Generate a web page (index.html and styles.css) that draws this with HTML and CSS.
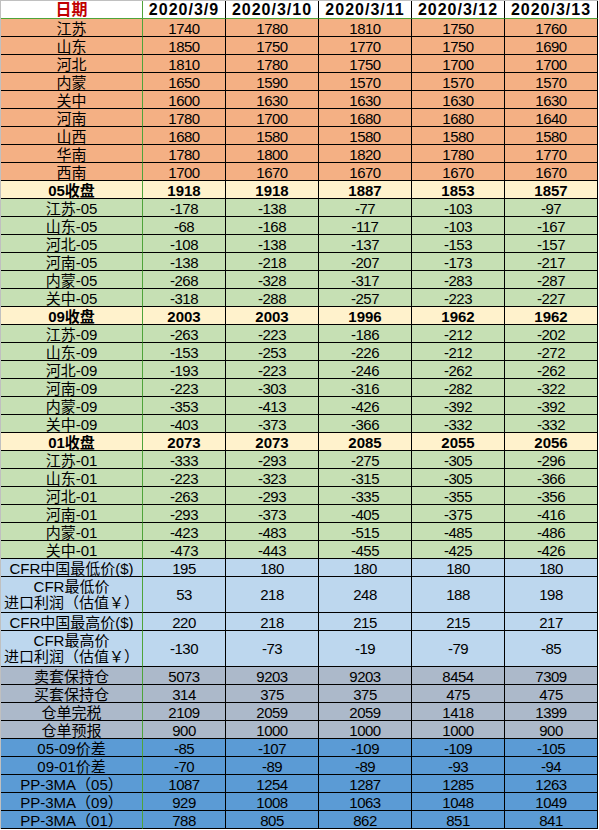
FILE: index.html
```html
<!DOCTYPE html>
<html lang="zh-CN">
<head>
<meta charset="utf-8">
<title>PP 价格表</title>
<link rel="stylesheet" href="styles.css">
</head>
<body>
<table class="sheet">
  <colgroup>
    <col class="c-label"><col class="c-first"><col class="c-data"><col class="c-data"><col class="c-data"><col class="c-data">
  </colgroup>
  <thead>
    <tr class="head">
      <th class="date-label">日期</th><th>2020/3/9</th><th>2020/3/10</th><th>2020/3/11</th><th>2020/3/12</th><th>2020/3/13</th>
    </tr>
  </thead>
  <tbody>
    <tr class="orange"><td>江苏</td><td>1740</td><td>1780</td><td>1810</td><td>1750</td><td>1760</td></tr>
    <tr class="orange"><td>山东</td><td>1850</td><td>1750</td><td>1770</td><td>1750</td><td>1690</td></tr>
    <tr class="orange"><td>河北</td><td>1810</td><td>1780</td><td>1750</td><td>1700</td><td>1700</td></tr>
    <tr class="orange"><td>内蒙</td><td>1650</td><td>1590</td><td>1570</td><td>1570</td><td>1570</td></tr>
    <tr class="orange"><td>关中</td><td>1600</td><td>1630</td><td>1630</td><td>1630</td><td>1630</td></tr>
    <tr class="orange"><td>河南</td><td>1780</td><td>1700</td><td>1680</td><td>1680</td><td>1640</td></tr>
    <tr class="orange"><td>山西</td><td>1680</td><td>1580</td><td>1580</td><td>1580</td><td>1580</td></tr>
    <tr class="orange"><td>华南</td><td>1780</td><td>1800</td><td>1820</td><td>1780</td><td>1770</td></tr>
    <tr class="orange"><td>西南</td><td>1700</td><td>1670</td><td>1670</td><td>1670</td><td>1670</td></tr>

    <tr class="close"><td>05收盘</td><td>1918</td><td>1918</td><td>1887</td><td>1853</td><td>1857</td></tr>
    <tr class="green"><td>江苏-05</td><td>-178</td><td>-138</td><td>-77</td><td>-103</td><td>-97</td></tr>
    <tr class="green"><td>山东-05</td><td>-68</td><td>-168</td><td>-117</td><td>-103</td><td>-167</td></tr>
    <tr class="green"><td>河北-05</td><td>-108</td><td>-138</td><td>-137</td><td>-153</td><td>-157</td></tr>
    <tr class="green"><td>河南-05</td><td>-138</td><td>-218</td><td>-207</td><td>-173</td><td>-217</td></tr>
    <tr class="green"><td>内蒙-05</td><td>-268</td><td>-328</td><td>-317</td><td>-283</td><td>-287</td></tr>
    <tr class="green"><td>关中-05</td><td>-318</td><td>-288</td><td>-257</td><td>-223</td><td>-227</td></tr>

    <tr class="close"><td>09收盘</td><td>2003</td><td>2003</td><td>1996</td><td>1962</td><td>1962</td></tr>
    <tr class="green"><td>江苏-09</td><td>-263</td><td>-223</td><td>-186</td><td>-212</td><td>-202</td></tr>
    <tr class="green"><td>山东-09</td><td>-153</td><td>-253</td><td>-226</td><td>-212</td><td>-272</td></tr>
    <tr class="green"><td>河北-09</td><td>-193</td><td>-223</td><td>-246</td><td>-262</td><td>-262</td></tr>
    <tr class="green"><td>河南-09</td><td>-223</td><td>-303</td><td>-316</td><td>-282</td><td>-322</td></tr>
    <tr class="green"><td>内蒙-09</td><td>-353</td><td>-413</td><td>-426</td><td>-392</td><td>-392</td></tr>
    <tr class="green"><td>关中-09</td><td>-403</td><td>-373</td><td>-366</td><td>-332</td><td>-332</td></tr>

    <tr class="close"><td>01收盘</td><td>2073</td><td>2073</td><td>2085</td><td>2055</td><td>2056</td></tr>
    <tr class="green"><td>江苏-01</td><td>-333</td><td>-293</td><td>-275</td><td>-305</td><td>-296</td></tr>
    <tr class="green"><td>山东-01</td><td>-223</td><td>-323</td><td>-315</td><td>-305</td><td>-366</td></tr>
    <tr class="green"><td>河北-01</td><td>-263</td><td>-293</td><td>-335</td><td>-355</td><td>-356</td></tr>
    <tr class="green"><td>河南-01</td><td>-293</td><td>-373</td><td>-405</td><td>-375</td><td>-416</td></tr>
    <tr class="green"><td>内蒙-01</td><td>-423</td><td>-483</td><td>-515</td><td>-485</td><td>-486</td></tr>
    <tr class="green"><td>关中-01</td><td>-473</td><td>-443</td><td>-455</td><td>-425</td><td>-426</td></tr>

    <tr class="sky"><td>CFR中国最低价($)</td><td>195</td><td>180</td><td>180</td><td>180</td><td>180</td></tr>
    <tr class="sky tall"><td>CFR最低价<br>进口利润（估值￥）</td><td>53</td><td>218</td><td>248</td><td>188</td><td>198</td></tr>
    <tr class="sky"><td>CFR中国最高价($)</td><td>220</td><td>218</td><td>215</td><td>215</td><td>217</td></tr>
    <tr class="sky tall"><td>CFR最高价<br>进口利润（估值￥）</td><td>-130</td><td>-73</td><td>-19</td><td>-79</td><td>-85</td></tr>

    <tr class="slate"><td>卖套保持仓</td><td>5073</td><td>9203</td><td>9203</td><td>8454</td><td>7309</td></tr>
    <tr class="slate"><td>买套保持仓</td><td>314</td><td>375</td><td>375</td><td>475</td><td>475</td></tr>
    <tr class="slate"><td>仓单完税</td><td>2109</td><td>2059</td><td>2059</td><td>1418</td><td>1399</td></tr>
    <tr class="slate"><td>仓单预报</td><td>900</td><td>1000</td><td>1000</td><td>1000</td><td>900</td></tr>

    <tr class="blue"><td>05-09价差</td><td>-85</td><td>-107</td><td>-109</td><td>-109</td><td>-105</td></tr>
    <tr class="blue"><td>09-01价差</td><td>-70</td><td>-89</td><td>-89</td><td>-93</td><td>-94</td></tr>
    <tr class="blue"><td>PP-3MA（05）</td><td>1087</td><td>1254</td><td>1287</td><td>1285</td><td>1263</td></tr>
    <tr class="blue"><td>PP-3MA（09）</td><td>929</td><td>1008</td><td>1063</td><td>1048</td><td>1049</td></tr>
    <tr class="blue"><td>PP-3MA（01）</td><td>788</td><td>805</td><td>862</td><td>851</td><td>841</td></tr>
  </tbody>
</table>
</body>
</html>
```

FILE: styles.css
```css
html, body {
  margin: 0;
  padding: 0;
  background: #ffffff;
}

.sheet {
  table-layout: fixed;
  width: 598px;
  border-collapse: separate;
  border-spacing: 0;
  border-top: 1px solid #c0c0c0;
  border-left: 1px solid #c0c0c0;
  font-family: "Liberation Sans", "Noto Sans CJK SC", sans-serif;
  font-size: 15px;
  color: #000000;
}

.c-label { width: 142px; }
.c-first { width: 83px; }
.c-data  { width: 93px; }

.sheet th,
.sheet td {
  padding: 0;
  text-align: center;
  white-space: nowrap;
  line-height: 14px;
  vertical-align: bottom;
  border-right: 1px solid #000000;
  border-bottom: 1px solid #000000;
  font-weight: normal;
}

.sheet td + td {
  letter-spacing: -0.5px;
}

.sheet th:first-child,
.sheet td:first-child {
  border-right-color: #4fa43a;
}

.sheet tr { height: 18px; }

.head { height: 19px; }
.head th {
  background: #ffffff;
  font-weight: bold;
  font-size: 16px;
  line-height: 16px;
  letter-spacing: 1px;
  border-bottom-color: #4fa43a;
}
.head .date-label {
  color: #c00000;
  letter-spacing: 0;
}

.orange td { background: #f4b084; }
.green td  { background: #c6e0b4; }
.close td  { background: #fff2cc; font-weight: bold; }
.close td + td { letter-spacing: 0; }
.sky td    { background: #bdd7ee; }
.slate td  { background: #acb9ca; }
.blue td   { background: #5b9bd5; }

.sheet .tall { height: 36px; }
.tall td { vertical-align: middle; line-height: 16px; }
.tall td:first-child { vertical-align: bottom; padding-bottom: 1px; }
```
